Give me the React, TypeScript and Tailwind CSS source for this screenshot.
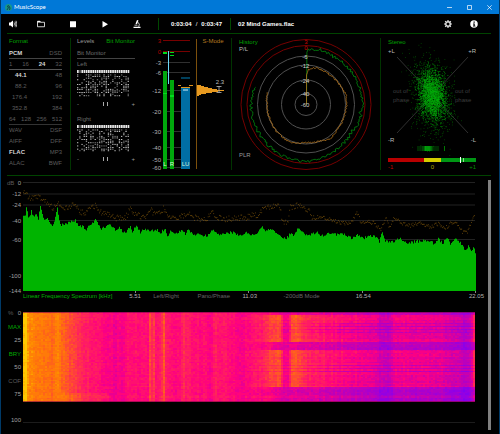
import type React from "react";
import clsx from "clsx";

// Small seeded generator so the meters look the same on every render
const createRandom = (seed: number) => {
  let s = seed;
  return () => {
    s = (s * 1664525 + 1013904223) % 4294967296;
    return s / 4294967296;
  };
};

type Point = [number, number];

const interpolate = (points: Point[], x: number) => {
  if (x <= points[0][0]) return points[0][1];
  for (let i = 1; i < points.length; i++) {
    const [x1, y1] = points[i];
    if (x <= x1) {
      const [x0, y0] = points[i - 1];
      return y0 + ((y1 - y0) * (x - x0)) / (x1 - x0);
    }
  }
  return points[points.length - 1][1];
};

/* ---------- Title bar and toolbar ---------- */

const TitleBar = () => (
  <header className="flex h-[14px] items-center bg-[#0078d7] pl-1 text-white">
    <svg viewBox="0 0 14 14" className="h-[7px] w-[7px]" aria-hidden="true">
      <circle cx="7" cy="7" r="7" fill="#17978a" />
      <path d="M7 2l-2 4 2 1-3 5M8 4l2 4-1 4" fill="none" stroke="#0b3d4a" strokeWidth="1.8" />
    </svg>
    <h1 className="ml-[2px] flex-1 font-['Lato',sans-serif] text-[6px] leading-[8px]">MusicScope</h1>
    <button aria-label="Minimize" className="flex h-full w-5 items-center justify-center">
      <svg viewBox="0 0 5 5" className="h-[5px] w-[5px]">
        <path d="M0 2.5h5" stroke="#fff" strokeWidth="0.7" />
      </svg>
    </button>
    <button aria-label="Maximize" className="flex h-full w-5 items-center justify-center">
      <svg viewBox="0 0 5 5" className="h-[5px] w-[5px]">
        <path d="M.5 .5h4v4h-4z" fill="none" stroke="#fff" strokeWidth="0.7" />
      </svg>
    </button>
    <button aria-label="Close" className="flex h-full w-5 items-center justify-center">
      <svg viewBox="0 0 5 5" className="h-[5px] w-[5px]">
        <path d="M.3 .3l4.4 4.4M4.7 .3L.3 4.7" stroke="#fff" strokeWidth="0.7" />
      </svg>
    </button>
  </header>
);

const ToolButton = ({
  label,
  className = "w-8",
  children,
}: {
  label: string;
  className?: string;
  children: React.ReactNode;
}) => (
  <button aria-label={label} className={clsx("flex h-full items-center justify-center", className)}>
    <svg viewBox="0 0 16 16" className="h-2 w-2" fill="#fff">
      {children}
    </svg>
  </button>
);

const Toolbar = () => (
  <div className="flex h-[19px] items-center text-[6px] leading-[8px] text-white">
    <ToolButton label="Volume" className="w-6">
      <path d="M0 5h3l5-4v14l-5-4H0z" />
      <path d="M10 5q2 3 0 6M12 3q3.5 5 0 10M14 1.500q4 6.500 0 13" fill="none" stroke="#fff" strokeWidth="1.300" />
    </ToolButton>
    <ToolButton label="Open file">
      <path d="M1 13.500v-11h5l1.500 2H15v9z" fill="none" stroke="#fff" strokeWidth="1.600" />
      <path d="M1 2h5l2 3H1z" />
    </ToolButton>
    <ToolButton label="Stop">
      <path d="M2 2.500h12v12H2z" />
    </ToolButton>
    <ToolButton label="Play">
      <path d="M3 2l11 6.500L3 15z" />
    </ToolButton>
    <ToolButton label="Analyze">
      <path d="M8 0l3 1.200-3 7.300-3-1.200zM1 13.500h14V16H1zM3 9.500h6V11H3z" />
      <path d="M10 4.500q4.500 3.500 1.500 9" fill="none" stroke="#fff" strokeWidth="1.600" />
    </ToolButton>
    <div className="ml-[5px] h-3 w-px bg-[#004800]" />
    <span className="ml-3 font-bold">0:03:04</span>
    <span className="px-1">/</span>
    <span className="font-bold">0:03:47</span>
    <div className="ml-2 h-3 w-px bg-[#004800]" />
    <span className="ml-[7px] flex-1 font-bold">02 Mind Games.flac</span>
    <ToolButton label="Settings" className="w-[26px]">
      <circle cx="8" cy="8" r="4.500" fill="none" stroke="#ddd" strokeWidth="3" />
      <path d="M8 0v3M8 13v3M0 8h3M13 8h3M2.300 2.300l2 2M11.700 11.700l2 2M13.700 2.300l-2 2M2.300 13.700l2-2" stroke="#ddd" strokeWidth="2.400" />
    </ToolButton>
    <ToolButton label="Info" className="mr-3 w-[26px]">
      <circle cx="8" cy="8" r="7.500" />
      <path d="M7 3h2.500v2.300H7zM6 7h3.500v4.500H11V13H6v-1.500h1V8.500H6z" fill="#000" />
    </ToolButton>
  </div>
);

/* ---------- Format ---------- */

const FormatRow = ({
  items,
  active,
  className = "h-[11px]",
}: {
  items: string[];
  active?: string;
  className?: string;
}) => (
  <div className={clsx("flex items-center justify-between", className)}>
    {items.map((item) => (
      <span key={item} className={item === active ? "font-bold text-[#d4d4d4]" : "text-[#5c5c5c]"}>
        {item}
      </span>
    ))}
  </div>
);

const FormatPanel = () => (
  <section className="border-r border-[#003400] pr-2 pl-[2px]">
    <h2 className="mb-[3px] leading-[7px] text-[#00a000]">Format</h2>
    <FormatRow items={["PCM", "DSD"]} active="PCM" className="h-[11px] border-b border-[#444]" />
    <FormatRow items={["1", "16", "24", "32"]} active="24" className="h-[11px] border-b border-[#555]" />
    <FormatRow items={["44.1", "48"]} active="44.1" className="h-[11px] pl-[6px]" />
    <FormatRow items={["88.2", "96"]} className="h-[11px] pl-[6px]" />
    <FormatRow items={["176.4", "192"]} className="h-[11px] pl-[3px]" />
    <FormatRow items={["352.8", "384"]} className="h-[11px] pl-[3px]" />
    <FormatRow items={["64", "128", "256", "512"]} className="h-[11px] border-b border-[#333]" />
    <FormatRow items={["WAV", "DSF"]} />
    <FormatRow items={["AIFF", "DFF"]} />
    <FormatRow items={["FLAC", "MP3"]} active="FLAC" />
    <FormatRow items={["ALAC", "BWF"]} />
  </section>
);

/* ---------- Levels ---------- */

const BitMonitor = ({ channel, seed }: { channel: string; seed: number }) => {
  const random = createRandom(seed);
  const bits: React.ReactNode[] = [];
  for (let col = 0; col < 24; col++) {
    for (let row = 0; row < 14; row++) {
      const level = random();
      if (level > (col < 4 ? 0.3 : 0.56)) continue;
      bits.push(
        <rect
          key={`${col}-${row}`}
          x={col * 2.2}
          y={5.5 + row * 1.6}
          width="1.3"
          height="0.9"
          fill={level > 0.25 ? "#8c8c8c" : "#d8d8d8"}
        />,
      );
    }
  }
  return (
    <div>
      <h3 className="h-[10px] leading-[10px] text-[#6c6c6c]">{channel}</h3>
      <svg viewBox="0 0 58 28" className="h-[28px] w-full" role="img" aria-label={`${channel} bits`}>
        {Array.from({ length: 24 }, (_, i) => (
          <rect key={i} x={i * 2.2} y="1" width="1.7" height="3" fill={i === 1 ? "#555" : "#e8e8e8"} />
        ))}
        {bits}
      </svg>
      <div className="flex h-[14px] items-center justify-between text-[#999]">
        <span>-</span>
        <span className="flex gap-[3px]">
          <i className="h-1 w-px bg-[#aaa]" />
          <i className="h-1 w-px bg-[#aaa]" />
        </span>
        <span>+</span>
      </div>
    </div>
  );
};

const levelScale: [string, number][] = [
  ["3", 2.5],
  ["0", 13.5],
  ["-3", 24.5],
  ["-6", 34.5],
  ["-12", 52.5],
  ["-20", 73.5],
  ["-30", 93.5],
  ["-40", 109.5],
  ["-50", 121.5],
  ["-60", 129.5],
];

const LevelMeter = () => (
  <svg viewBox="0 0 96 132" className="min-w-0 flex-1" role="img" aria-label="Level meter">
    {levelScale.map(([label, y], i) => (
      <g key={label}>
        <path d={`M28 ${y}h27`} stroke={i < 2 ? "#780000" : "#303030"} />
        <text x="26" y={y + 2} textAnchor="end" fill={i < 2 ? "#b80000" : "#b4b4b4"}>
          {label}
        </text>
      </g>
    ))}
    <path d="M28 33h4v98h-4zM35 42h4v89h-4z" fill="#00a80c" />
    <path d="M28 55h4v1h-4zM35 57h4v2h-4zM28 14h4v2h-4zM35 14h4v1h-4zM35 17h4v1h-4z" fill="#00dc1c" />
    <path d="M33 13h1v33h-1z" fill="#6cd8f4" />
    <path d="M46 50h9v81h-9z" fill="#006ea4" />
    <path d="M46 39h9v2h-9z" fill="#00405c" />
    <path d="M46 49h9v1h-9zM43 47h3v1h-3zM54 47h4v1h-4z" fill="#e0921c" />
    <path d="M48 51.500h5v1h-5z" fill="#d8eef8" />
    <g fill="#d8f0d8" textAnchor="middle">
      <text x="30" y="128">L</text>
      <text x="37" y="128">R</text>
      <text x="50.500" y="128">LU</text>
    </g>
    <path d="M61.500 1v130" stroke="#7c500c" />
    <path
      d="M62 47h4v1h3v1h4v1h4v1h5v1h7v1h-6v1h-6v1h-6v1h-5v1h-2v1h-2z"
      fill="#e89a20"
    />
    <path d="M81.500 48.500h5M84 48.500v6M81.500 54.500h5" fill="none" stroke="#bbb" strokeWidth="0.800" />
    <text x="85" y="46" textAnchor="middle" fill="#bbb">
      2.3
    </text>
    <text x="78" y="5" textAnchor="middle" fill="#b87c20">
      S-Mode
    </text>
  </svg>
);

const LevelsPanel = () => (
  <section className="flex border-r border-[#003400] pl-[6px]">
    <div className="w-[58px]">
      <div className="mb-[3px] flex justify-between leading-[7px]">
        <button className="text-[#999]">Levels</button>
        <button className="text-[#00a000]">Bit Monitor</button>
      </div>
      <p className="h-[11px] border-b border-[#444] leading-[10px] text-[#6c6c6c]">Bit Monitor</p>
      <BitMonitor channel="Left" seed={11} />
      <div className="h-[3px]" />
      <BitMonitor channel="Right" seed={23} />
    </div>
    <LevelMeter />
  </section>
);

/* ---------- History ---------- */

const polarPath = (points: Point[], jitter: number, seed: number) => {
  const random = createRandom(seed);
  const end = points[points.length - 1][0];
  let d = "";
  for (let angle = points[0][0]; angle <= end; angle += 1.5) {
    const r = interpolate(points, angle) + (random() - 0.5) * jitter;
    const a = ((angle - 90) * Math.PI) / 180;
    d += `L${(74 + r * Math.cos(a)).toFixed(1)} ${(66.5 + r * Math.sin(a)).toFixed(1)}`;
  }
  return `M74.500 66.500${d}`;
};

const peakHistory: Point[] = [
  [1, 53], [2, 55], [10, 55], [13, 57], [30, 55], [60, 56], [88, 57], [97, 57], [99, 52], [101, 56],
  [110, 56], [120, 53], [140, 54], [165, 56], [180, 57], [210, 56], [240, 55], [270, 55], [285, 54], [290, 54],
];

const loudnessHistory: Point[] = [
  [1, 30], [4, 35], [14, 38], [40, 38], [60, 39], [78, 41], [100, 40], [125, 40], [145, 42], [160, 39],
  [180, 38], [205, 41], [222, 40], [245, 39], [270, 39], [288, 41],
];

const HistoryPanel = () => (
  <section className="border-r border-[#003400]">
    <svg viewBox="0 0 148 132" className="w-full" role="img" aria-label="History">
      <g fill="none" stroke="#505050">
        <circle cx="74" cy="66.500" r="48.500" />
        <circle cx="74" cy="66.500" r="39.500" />
        <circle cx="74" cy="66.500" r="24.500" />
        <circle cx="74" cy="66.500" r="11" />
        <circle cx="74" cy="66.500" r="59" stroke="#760000" />
        <circle cx="74" cy="66.500" r="65" stroke="#760000" />
      </g>
      <path d={polarPath(peakHistory, 3, 5)} fill="none" stroke="#008c0c" strokeWidth="0.800" />
      <path d={polarPath(loudnessHistory, 1.5, 9)} fill="none" stroke="#b4741c" strokeWidth="0.800" />
      <g fill="#d0d0d0" textAnchor="middle">
        <text x="74" y="6" fill="#d00000">3</text>
        <text x="74" y="12" fill="#d00000">0</text>
        <text x="73" y="21">-6</text>
        <text x="73" y="30">-12</text>
        <text x="73" y="45">-24</text>
        <text x="73" y="58">-40</text>
        <text x="73" y="69">-60</text>
      </g>
      <text x="7" y="6" fill="#00a000">History</text>
      <text x="7" y="13" fill="#bbb">P/L</text>
      <text x="7" y="119" fill="#999">PLR</text>
    </svg>
  </section>
);

/* ---------- Stereo ---------- */

const StereoPanel = () => {
  const random = createRandom(77);
  const gauss = () => random() + random() + random() + random() - 2;
  const dots = Array.from({ length: 3200 }, (_, i) => {
    const wide = i % 3 === 0;
    const dy = gauss() * (wide ? 34 : 20);
    const dx = gauss() * (wide ? 17 : 11) + dy * 0.1;
    return { x: 51 + dx, y: 57 + dy, dim: wide };
  });
  return (
    <section>
      <svg viewBox="0 0 110 132" className="w-full" role="img" aria-label="Stereo">
        <path d="M16 19l71 76M87 19L16 95" stroke="#3c3c3c" strokeWidth="0.800" />
        {dots.map((dot, i) => (
          <rect
            key={i}
            x={dot.x}
            y={dot.y}
            width="0.7"
            height="0.7"
            fill={dot.dim ? "#006a00" : "#00b00c"}
          />
        ))}
        <text x="7" y="6" fill="#00a000">Stereo</text>
        <g fill="#bbb">
          <text x="7" y="15">+L</text>
          <text x="95" y="15" textAnchor="end">+R</text>
          <text x="7" y="104">-R</text>
          <text x="95" y="104" textAnchor="end">-L</text>
        </g>
        <g fill="#3e3e3e">
          <text x="12" y="55">out of</text>
          <text x="12" y="64">phase</text>
          <text x="74" y="55">out of</text>
          <text x="74" y="64">phase</text>
        </g>
        {Array.from({ length: 22 }, (_, i) => (
          <rect
            key={i}
            x={36 + i}
            y="108"
            width="1"
            height="5"
            fill="#00c80c"
            opacity={Math.max(0.2, 1 - Math.abs(i - 10) / 11 - random() * 0.3)}
          />
        ))}
        <path d="M63 108h1v5h-1z" fill="#007800" />
        <path d="M7 120h36v4H7z" fill="#b80000" />
        <path d="M43 120h17v4H43z" fill="#d4cc00" />
        <path d="M60 120h35v4H60z" fill="#009614" />
        <path d="M79 119h1v6h-1z" fill="#fff" />
        <path d="M82 120h1v4h-1z" fill="#90d890" />
        <text x="7" y="131" fill="#c80000">-1</text>
        <text x="51.500" y="131" fill="#b0a800" textAnchor="middle">0</text>
        <text x="95" y="131" fill="#009000" textAnchor="end">+1</text>
      </svg>
    </section>
  );
};

/* ---------- Spectrum ---------- */

const spectrum: Point[] = [
  [23, 36], [25, 34], [26, 26], [28, 36], [30, 35], [31, 31], [33, 36], [36, 33], [38, 38], [40, 26],
  [42, 34], [44, 40], [47, 38], [50, 42], [53, 45], [55, 37], [57, 28], [59, 41], [61, 45], [66, 43],
  [71, 41], [75, 40], [79, 46], [82, 45], [85, 50], [88, 46], [92, 43], [95, 39], [98, 44], [101, 48],
  [106, 46], [110, 43], [113, 48], [116, 51], [119, 45], [122, 52], [126, 51], [130, 45], [132, 52],
  [136, 45], [140, 52], [145, 48], [150, 52], [155, 48], [160, 52], [165, 49], [167, 57], [170, 51],
  [176, 53], [180, 50], [185, 53], [188, 48], [192, 54], [200, 53], [206, 56], [212, 49], [218, 54],
  [225, 53], [232, 52], [240, 55], [246, 52], [250, 54], [256, 53], [262, 47], [265, 51], [270, 49],
  [276, 52], [281, 55], [285, 59], [290, 53], [293, 55], [298, 47], [302, 52], [307, 55], [313, 53],
  [317, 51], [320, 56], [328, 53], [337, 54], [345, 54], [352, 58], [358, 54], [362, 58], [368, 56],
  [374, 55], [379, 61], [382, 51], [385, 60], [388, 62], [395, 60], [400, 58], [407, 63], [415, 61],
  [425, 60], [434, 63], [438, 58], [442, 63], [447, 57], [450, 63], [455, 58], [460, 62], [464, 69],
  [468, 66], [471, 72], [473, 67], [475, 72],
];

const peakSpectrum: Point[] = [
  [24, 11], [30, 19], [36, 18], [38, 15], [42, 21], [48, 22], [53, 28], [57, 22], [62, 28], [68, 28],
  [74, 25], [80, 32], [86, 33], [92, 27], [96, 26], [100, 32], [108, 34], [116, 38], [125, 38],
  [130, 29], [134, 33], [140, 37], [145, 39], [150, 30], [155, 34], [160, 34], [163, 29], [166, 35],
  [172, 37], [180, 37], [187, 34], [195, 38], [205, 40], [212, 33], [216, 38], [225, 39], [235, 38],
  [245, 38], [250, 36], [258, 35], [262, 29], [268, 27], [280, 27], [282, 41], [288, 43], [290, 27],
  [298, 25], [304, 28], [308, 30], [312, 38], [320, 37], [330, 40], [342, 43], [350, 44], [357, 33],
  [360, 41], [368, 42], [374, 43], [380, 50], [386, 38], [389, 47], [394, 37], [400, 43], [410, 46],
  [420, 43], [430, 47], [438, 44], [445, 48], [450, 44], [457, 44], [462, 52], [466, 53], [470, 46],
  [475, 32],
];

const dbScale: [string, number][] = [
  ["0", 2.5],
  ["-12", 14],
  ["-24", 25],
  ["-40", 40.5],
  ["-60", 59.5],
  ["-100", 96],
  ["-144", 110.5],
];

const SpectrumChart = () => {
  const random = createRandom(3);
  let area = "M23 111";
  for (let x = 23; x <= 475; x++) {
    area += `L${x} ${(interpolate(spectrum, x) + 0.5 + (random() - 0.5) * 3).toFixed(1)}h1`;
  }
  let peaks = "";
  for (let x = 23; x <= 475; x += 0.8) {
    const spread = x < 310 ? 6 : 4;
    peaks += `M${x.toFixed(1)} ${(interpolate(peakSpectrum, x) + (random() - 0.5) * spread).toFixed(1)}h.7`;
  }
  return (
    <svg viewBox="1 0 487 113" className="w-full" role="img" aria-label="Linear frequency spectrum">
      {dbScale.map(([label, y]) => (
        <g key={label}>
          <path d={`M23 ${y}h452`} stroke="#222" />
          <text x="21" y={y + 2} textAnchor="end" fill="#a0a0a0">
            {label}
          </text>
        </g>
      ))}
      <text x="7" y="4.500" fill="#5c5c5c">dB</text>
      <path d={`${area}V111z`} fill="#00b400" />
      <path d={peaks} fill="none" stroke="#94640c" strokeWidth="0.800" />
      <path d="M135.500 111v2M248.500 111v2M362.500 111v2M475.500 111v2" stroke="#888" />
    </svg>
  );
};

const SpectrumFooter = () => (
  <div className="grid h-[7px] grid-cols-[106fr_24fr_44fr_45fr_41fr_72fr_113fr_19fr] pl-[22px] leading-[7px] whitespace-nowrap text-[#b0b0b0] *:min-w-0 *:text-left">
    <h2 className="text-[#00b400]">Linear Frequency Spectrum [kHz]</h2>
    <span>5.51</span>
    <button className="text-[#666]">Left/Right</button>
    <button className="text-[#666]">Pano/Phase</button>
    <span>11.03</span>
    <button className="text-[#666]">-200dB Mode</button>
    <span>16.54</span>
    <span>22.05</span>
  </div>
);

/* ---------- Spectrogram ---------- */

const COLS = 226;
const ROWS = 60;
const LEVELS = 32;

const colorStops: [number, number, number, number][] = [
  [0, 110, 0, 255],
  [0.2, 150, 0, 225],
  [0.38, 205, 0, 170],
  [0.5, 255, 0, 128],
  [0.65, 255, 50, 75],
  [0.8, 255, 110, 15],
  [0.9, 255, 140, 0],
  [1, 255, 200, 0],
];

const heatColor = (v: number) => {
  const channel = (c: 1 | 2 | 3) =>
    Math.round(interpolate(colorStops.map((stop): Point => [stop[0], stop[c]]), v));
  return `rgb(${channel(1)},${channel(2)},${channel(3)})`;
};

// Average energy by horizontal position
const energy: Point[] = [
  [23, 1], [26, 1], [27, 0.9], [40, 0.83], [50, 0.78], [57, 0.84], [65, 0.74], [75, 0.67], [82, 0.6],
  [95, 0.55], [105, 0.51], [115, 0.48], [130, 0.55], [138, 0.52], [147, 0.54], [149, 0.68], [151, 0.6],
  [153, 0.68], [155, 0.57], [160, 0.56], [163, 0.74], [165, 0.56], [175, 0.54], [181, 0.56],
  [183, 0.65], [185, 0.56], [188, 0.6], [192, 0.55], [205, 0.53], [210, 0.5], [215, 0.58],
  [225, 0.54], [240, 0.51], [250, 0.53], [258, 0.57], [265, 0.63], [272, 0.71], [280, 0.74],
  [282, 0.5], [288, 0.48], [290, 0.71], [298, 0.73], [304, 0.63], [312, 0.58], [325, 0.56],
  [340, 0.52], [355, 0.5], [365, 0.47], [376, 0.45], [379, 0.39], [389, 0.38], [392, 0.46],
  [405, 0.48], [425, 0.46], [445, 0.44], [460, 0.38], [464, 0.3], [470, 0.36], [473, 0.6], [475, 0.6],
];

const Spectrogram = () => {
  const random = createRandom(41);
  const paths = Array.from({ length: LEVELS }, () => "");
  const colNoise = Array.from({ length: COLS }, () => (random() - 0.5) * 0.05);
  for (let row = 0; row < ROWS; row++) {
    const y = row * 1.5;
    const rowNoise = (random() - 0.5) * 0.08;
    const quiet = y < 3 || (y >= 30 && y < 37) || y >= 75;
    const striped = (y > 52 && y < 61) || y === 19.5 || (y > 10 && y < 17);
    for (let col = 0; col < COLS; col++) {
      const x = 23 + col * 2;
      const weight = Math.min(1, Math.max(0, (x - 235) / 110));
      let v = interpolate(energy, x);
      if (quiet) v = v + (Math.min(v, 0.52) - v) * Math.min(1, weight * 2.5) - 0.14 * weight;
      if (striped && row % 2 === 1) v -= 0.1 * weight;
      v += colNoise[col] + rowNoise * (0.4 + weight * 0.6) + (random() - 0.5) * 0.08;
      if (y > 80 && x > 60 && x < 108) v += 0.06;
      const level = Math.max(0, Math.min(LEVELS - 1, Math.round(v * (LEVELS - 1))));
      paths[level] += `M${col * 2} ${y}h2v1.5h-2z`;
    }
  }
  return (
    <svg
      viewBox="0 0 452 90"
      preserveAspectRatio="none"
      shapeRendering="crispEdges"
      className="h-[90px] w-full"
      role="img"
      aria-label="Spectrogram"
    >
      {paths.map((d, i) => (
        <path key={i} d={d} fill={heatColor(i / (LEVELS - 1))} />
      ))}
      <path d="M0 .5h452M0 89.500h452" stroke="#7c0048" strokeOpacity="0.600" />
    </svg>
  );
};

const SpectrogramPanel = () => (
  <section className="mt-3 flex pr-[13px] pb-[3px]">
    <div className="w-[22px] pr-[2px] text-right text-[#a0a0a0]">
      <div className="-mt-[5px] flex h-[94px] flex-col items-end justify-between leading-[13px]">
        <div className="flex w-full justify-between pl-[7px]">
          <span className="text-[#5c5c5c]">%</span>
          <span>0</span>
        </div>
        <button className="text-[#00a800]">MAX</button>
        <span>25</span>
        <button className="text-[#00a800]">BRY</button>
        <span>50</span>
        <button className="text-[#5c5c5c]">COF</button>
        <span>75</span>
      </div>
      <div className="mt-[13px] leading-[13px]">100</div>
    </div>
    <div className="min-w-0 flex-1">
      <Spectrogram />
      <div className="mt-5 h-px bg-[#1c1c1c]" />
    </div>
  </section>
);

export default function App() {
  return (
    <div className="border-x border-b border-[#003a68] bg-black font-['Liberation_Sans',Arial,sans-serif] text-[6px]">
      <TitleBar />
      <Toolbar />
      <div className="mr-2 ml-[6px] grid grid-cols-[64fr_161fr_149fr_110fr] border-y border-[#004400] pt-1 pb-[5px] *:min-w-0">
        <FormatPanel />
        <LevelsPanel />
        <HistoryPanel />
        <StereoPanel />
      </div>
      <main className="flex pt-1 pr-2 pb-1">
        <div className="min-w-0 flex-1">
          <SpectrumChart />
          <SpectrumFooter />
          <SpectrogramPanel />
        </div>
        <div className="w-[3px] bg-[#808080]" />
      </main>
    </div>
  );
}
